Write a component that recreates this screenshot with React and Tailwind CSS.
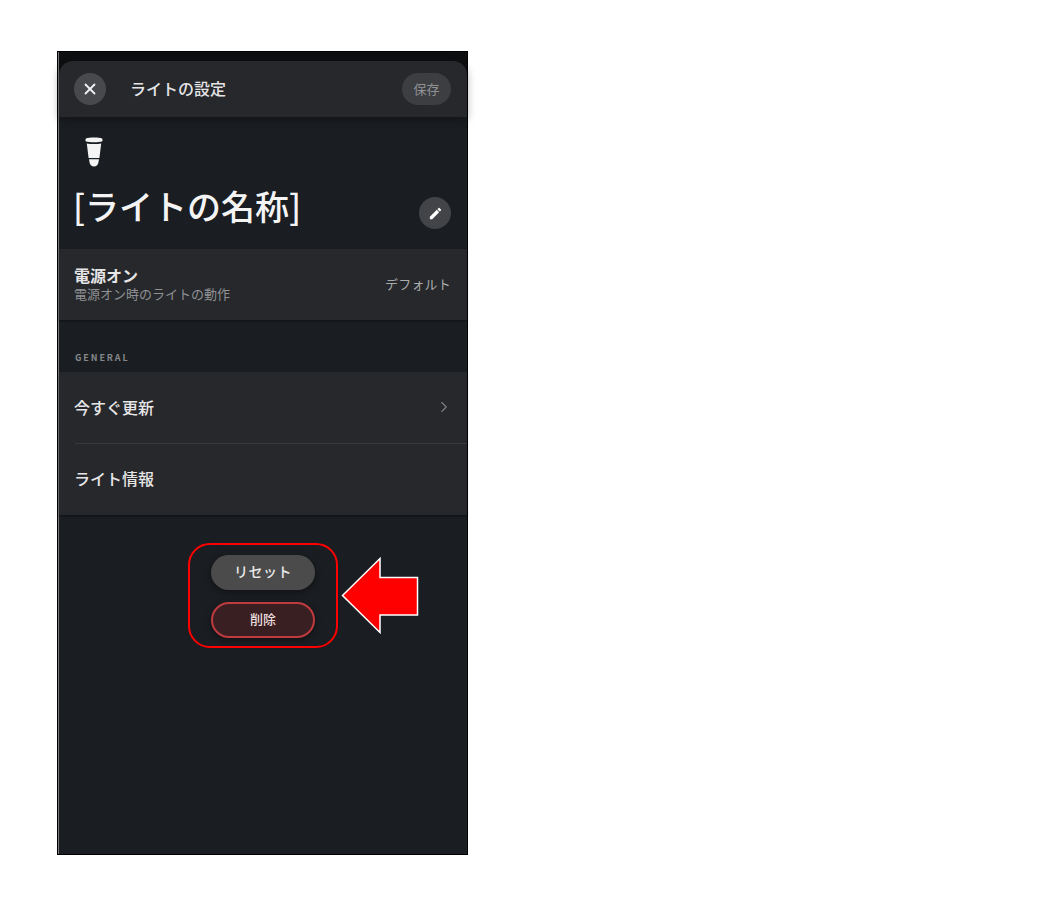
import { ChevronRight, X } from "lucide-react";

const FONT = "font-['Noto_Sans_CJK_JP','Noto_Sans',sans-serif]";

function BulbIcon() {
  return (
    <svg width="18" height="30" viewBox="0 0 18 30" fill="#f4f4f4">
      <path d="M1 1.500C4 .3 14 .3 17 1.500c.7.4.7 2.700 0 3.100C14 5.600 4 5.600 1 4.600c-.7-.4-.7-2.700 0-3.100z" />
      <path d="M1.800 6.500c4 .8 10.400 .8 14.400 0l-1.800 14.500H3.600z" />
      <path d="M4 22.200h10l-.6 3.300c-.5 2.500-2.200 4-4.400 4s-3.900-1.500-4.400-4z" />
    </svg>
  );
}

function EditIcon() {
  return (
    <svg width="15" height="15" viewBox="0 0 24 24" fill="currentColor">
      <path d="M3 17.250V21h3.750L17.810 9.940l-3.750-3.750L3 17.250zM20.710 7.040a1 1 0 0 0 0-1.410l-2.340-2.340a1 1 0 0 0-1.410 0l-1.830 1.830 3.750 3.750 1.830-1.830z" />
    </svg>
  );
}

function Row({ children, className = "" }) {
  return <div className={`flex h-[71px] items-center pr-4 ${className}`}>{children}</div>;
}

export default function App() {
  return (
    <div className={`relative h-[906px] w-[1058px] overflow-hidden bg-white pl-[57px] pt-[51px] ${FONT}`}>
      <div className="flex h-[804px] w-[411px] flex-col border border-black bg-[#1a1d21]">
        <div className="h-full border-l border-[#77797c]">
          <div className="bg-[#0e0f11] pt-[9px]">
            <header className="flex h-[56px] items-center rounded-t-[14px] bg-[#26282c] pl-[15px] pr-4 shadow-[0_2px_8px_rgba(0,0,0,.35)]">
              <button className="flex h-8 w-8 items-center justify-center rounded-full bg-[#47494d] text-[#f2f2f2]">
                <X className="h-[18px] w-[18px]" strokeWidth={2.4} />
              </button>
              <h1 className="mb-[2px] ml-[24px] text-base font-medium leading-none text-[#e4e4e5]">ライトの設定</h1>
              <button className="ml-auto flex h-8 w-[49px] items-center justify-center rounded-full bg-[#3c3e42] text-[13px] text-[#8f9194]">保存</button>
            </header>
          </div>

          <section className="relative h-[132px] pl-[26px] pt-[20px]">
            <BulbIcon />
            <h2 className="-ml-[12px] mt-[15px] text-[34px] font-medium leading-[48px] text-[#f4f4f4]">[ライトの名称]</h2>
            <button className="absolute right-4 top-[80px] flex h-8 w-8 items-center justify-center rounded-full bg-[#424448] text-white">
              <EditIcon />
            </button>
          </section>

          <Row className="bg-[#26282c] pl-[15px] shadow-[0_1px_2px_rgba(0,0,0,.4)]">
            <div className="font-['Inter','Noto_Sans_CJK_JP',sans-serif]">
              <div className="mb-[1px] text-base font-bold leading-[18px] text-[#e6e6e7]">電源オン</div>
              <div className="text-[13px] leading-[16px] text-[#8f9194]">電源オン時のライトの動作</div>
            </div>
            <span className="mb-[2px] ml-auto text-[13px] tracking-[.2px] text-[#a9abad]">デフォルト</span>
          </Row>

          <div className="flex h-[52px] items-end pb-[10px] pl-4 text-[9px] font-bold leading-none tracking-[1.9px] text-[#85878a]">GENERAL</div>

          <div className="h-[143px] bg-[#26282c] shadow-[0_1px_2px_rgba(0,0,0,.4)]">
            <Row className="pb-[2px] pl-[15px]">
              <span className="text-base font-medium text-[#e6e6e7]">今すぐ更新</span>
              <ChevronRight className="-mr-[2px] ml-auto h-[18px] w-[18px] text-[#7d7f82]" strokeWidth={1.5} />
            </Row>
            <div className="ml-4 h-px bg-[#38393d]" />
            <Row className="pb-[4px] pl-[15px]">
              <span className="text-base font-medium text-[#e6e6e7]">ライト情報</span>
            </Row>
          </div>

          <div className="mt-10 flex flex-col items-center gap-3">
            <button className="flex h-[35px] w-[104px] items-center justify-center rounded-full bg-[#4b4b4c] pb-[4px] text-sm font-medium tracking-[.5px] text-[#e8e8e8] shadow-[0_2px_6px_rgba(0,0,0,.4)]">リセット</button>
            <button className="flex h-[36px] w-[104px] items-center justify-center rounded-full border-2 border-[#bf3b3f] bg-[#3a1f22] pb-[2px] text-[13px] font-medium text-[#eadede] shadow-[0_2px_6px_rgba(0,0,0,.4)]">削除</button>
          </div>
        </div>
      </div>

      {/* annotation drawn over the screenshot */}
      <div className="absolute left-[188px] top-[543px] h-[105px] w-[150px] rounded-[22px] border-2 border-[#ff0000]" />
      <svg className="absolute left-[340px] top-[555px]" width="80" height="81" viewBox="0 0 80 81">
        <path d="M2.500 40.500 40 3.500V22.500H77.500V60H40V77.500z" fill="#ff0000" stroke="#fff" strokeWidth="1.500" />
      </svg>
    </div>
  );
}
